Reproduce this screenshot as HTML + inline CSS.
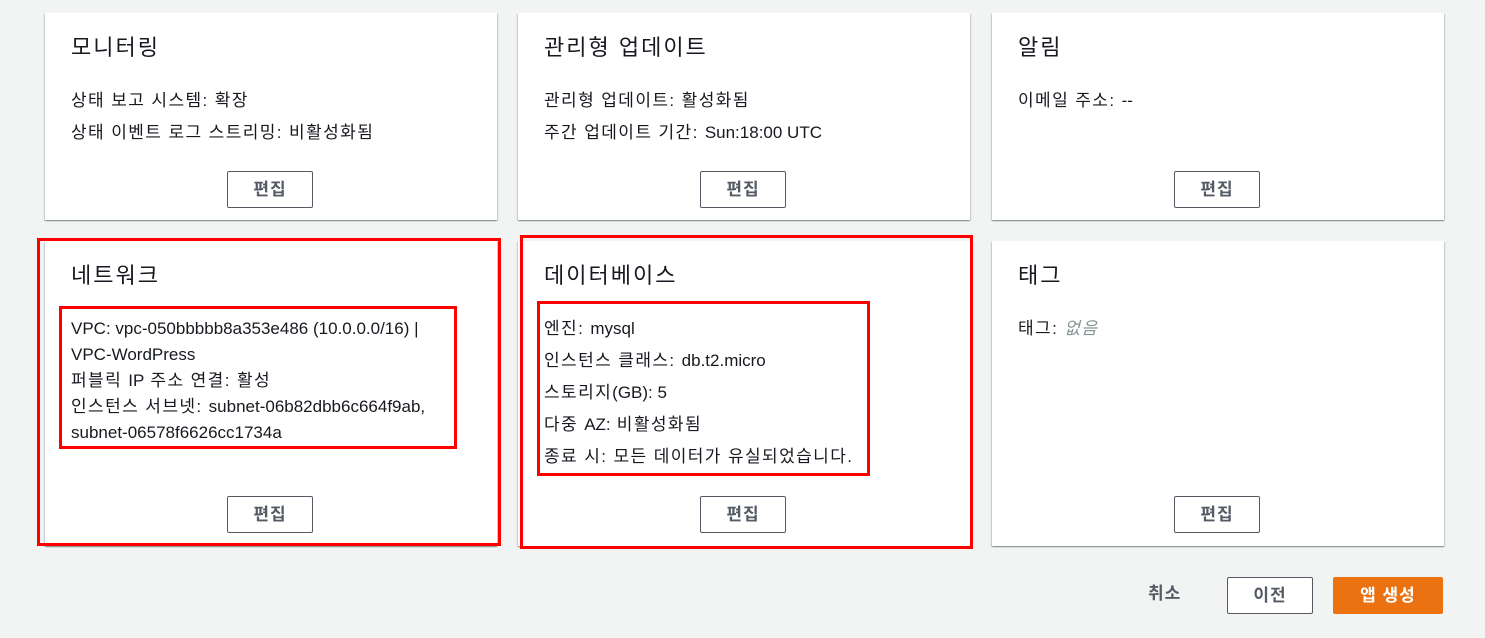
<html><head><style>
body{margin:0;width:1485px;height:638px;background:#f2f3f3;font-family:"Liberation Sans","Noto Sans CJK KR",sans-serif;color:#16191f;position:relative;overflow:hidden}
.card{position:absolute;background:#fff;box-shadow:0 1px 1px 0 rgba(0,28,36,.3),1px 1px 1px 0 rgba(0,28,36,.15),-1px 1px 1px 0 rgba(0,28,36,.15)}
.t{position:absolute;left:26px;top:21px;font-size:22px;line-height:28px;letter-spacing:2px}
.l{position:absolute;left:26px;font-size:17px;white-space:nowrap;line-height:20px;letter-spacing:1.4px;margin-top:2px}
.l b{font-weight:normal;letter-spacing:0}
.btn{position:absolute;width:86px;border:1px solid #545b64;border-radius:2px;background:#fff;font-weight:bold;font-size:17px;letter-spacing:1px;color:#545b64;text-align:center;line-height:35px;box-sizing:border-box;height:37px}
.red{position:absolute;border:3px solid #f00;box-sizing:border-box}
</style></head><body>
<div class="card" style="left:45px;top:13px;width:452px;height:207px">
<div class="t">모니터링</div>
<div class="l" style="top:76px">상태 보고 시스템: 확장</div>
<div class="l" style="top:108px">상태 이벤트 로그 스트리밍: 비활성화됨</div>
<div class="btn" style="left:182px;top:158px">편집</div></div>
<div class="card" style="left:518px;top:13px;width:452px;height:207px">
<div class="t">관리형 업데이트</div>
<div class="l" style="top:76px">관리형 업데이트: 활성화됨</div>
<div class="l" style="top:108px">주간 업데이트 기간: <b>Sun:18:00 UTC</b></div>
<div class="btn" style="left:182px;top:158px">편집</div></div>
<div class="card" style="left:992px;top:13px;width:452px;height:207px">
<div class="t">알림</div>
<div class="l" style="top:76px">이메일 주소: <b>--</b></div>
<div class="btn" style="left:182px;top:158px">편집</div></div>

<div class="card" style="left:45px;top:241px;width:452px;height:305px">
<div class="t">네트워크</div>
<div class="l" style="line-height:26px;top:73px"><b>VPC: vpc-050bbbbb8a353e486 (10.0.0.0/16) |</b><br><b>VPC-WordPress</b><br>퍼블릭 <b>IP</b> 주소 연결: 활성<br>인스턴스 서브넷: <b>subnet-06b82dbb6c664f9ab,</b><br><b>subnet-06578f6626cc1734a</b></div>
<div class="btn" style="left:182px;top:255px">편집</div></div>
<div class="card" style="left:518px;top:241px;width:452px;height:305px">
<div class="t">데이터베이스</div>
<div class="l" style="top:76px">엔진: <b>mysql</b></div>
<div class="l" style="top:108px">인스턴스 클래스: <b>db.t2.micro</b></div>
<div class="l" style="top:140px">스토리지<b>(GB): 5</b></div>
<div class="l" style="top:172px">다중 <b>AZ:</b> 비활성화됨</div>
<div class="l" style="top:204px">종료 시: 모든 데이터가 유실되었습니다.</div>
<div class="btn" style="left:182px;top:255px">편집</div></div>
<div class="card" style="left:992px;top:241px;width:452px;height:305px">
<div class="t">태그</div>
<div class="l" style="top:76px">태그: <i style="color:#879596">없음</i></div>
<div class="btn" style="left:182px;top:255px">편집</div></div>

<div class="red" style="left:37px;top:238px;width:464px;height:308px"></div>
<div class="red" style="left:520px;top:235px;width:453px;height:314px"></div>
<div class="red" style="left:59px;top:306px;width:398px;height:143px"></div>
<div class="red" style="left:537px;top:301px;width:333px;height:175px"></div>

<div style="position:absolute;left:1148px;top:584px;font-size:17px;letter-spacing:1px;line-height:20px;font-weight:bold;color:#545b64">취소</div>
<div class="btn" style="left:1227px;top:577px">이전</div>
<div style="position:absolute;left:1333px;top:577px;width:110px;height:37px;background:#ec7211;border-radius:2px;color:#fff;font-weight:bold;font-size:17px;letter-spacing:1px;text-align:center;line-height:37px">앱 생성</div>
</body></html>
